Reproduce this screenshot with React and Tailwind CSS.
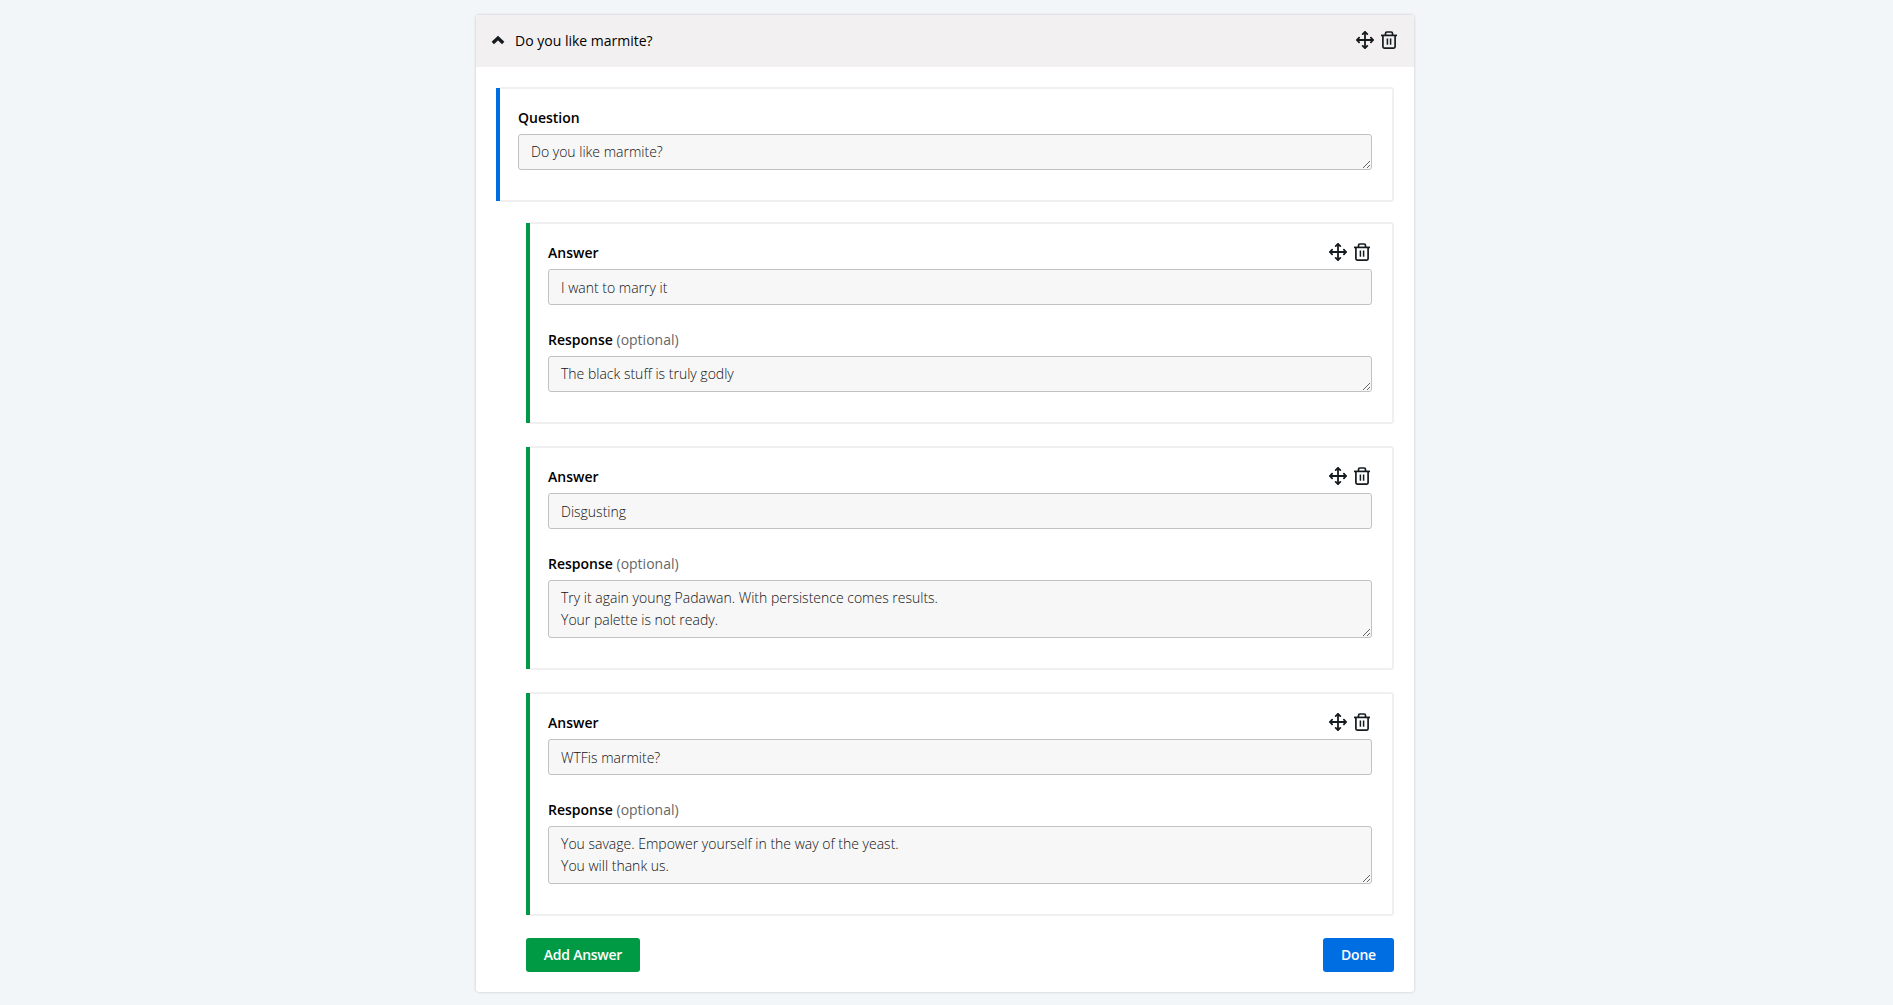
import React from 'react';

const answers = [
    {
        id: 1,
        answer: 'I want to marry it',
        response: 'The black stuff is truly godly',
        rows: 1,
    },
    {
        id: 2,
        answer: 'Disgusting',
        response: 'Try it again young Padawan. With persistence comes results.\nYour palette is not ready.',
        rows: 2,
    },
    {
        id: 3,
        answer: 'WTFis marmite?',
        response: 'You savage. Empower yourself in the way of the yeast.\nYou will thank us.',
        rows: 2,
    },
];

const MoveIcon = () => (
    <svg width="18" height="18" viewBox="0 0 18 18" fill="none" stroke="currentColor" strokeWidth="1.8" strokeLinecap="round" strokeLinejoin="round">
        <path d="M9 1.2V16.8M1.2 9H16.8" />
        <path d="M6.7 3.1L9 1L11.3 3.1M6.7 14.9L9 17L11.3 14.9M3.1 6.7L1 9L3.1 11.3M14.9 6.7L17 9L14.9 11.3" />
    </svg>
);

const TrashIcon = () => (
    <svg width="16" height="18" viewBox="0 0 16 18" fill="none" stroke="currentColor" strokeWidth="1.7">
        <path d="M0 4.4H16" />
        <path d="M4.5 4.2V2.4Q4.5 1 5.9 1H10.1Q11.5 1 11.5 2.4V4.2" />
        <path d="M1.9 4.3V15.8Q1.9 17.1 3.2 17.1H12.8Q14.1 17.1 14.1 15.8V4.3" />
        <path d="M6.4 7.4V13.8M9.6 7.4V13.8" strokeWidth="1.5" />
    </svg>
);

// move + delete buttons, shared by the header and every answer
const Actions = () => (
    <div className="flex items-center gap-[7px] text-[#151b1f]">
        <button aria-label="Move"><MoveIcon /></button>
        <button aria-label="Delete"><TrashIcon /></button>
    </div>
);

const fieldStyles = 'block w-full rounded-[3px] border border-[#c2c2c2] bg-[#f7f7f7] px-3 text-sm leading-[22px] font-light text-[#111111] outline-none';

// Panel with a coloured bar on its left side
const Panel = ({ barColor, children }) => (
    <div className="flex">
        <div className={`my-px w-1 shrink-0 ${barColor}`} />
        <div className="flex-1 rounded-r-[3px] border-2 border-l-0 border-[#f0f0f0] pt-[19px] pr-5 pb-[30px] pl-[18px]">
            {children}
        </div>
    </div>
);

const AnswerPanel = ({ item }) => (
    <Panel barColor="bg-[#009a44]">
        <div className="flex h-[26px] items-start justify-between pr-0.5">
            <label className="text-sm leading-5 font-semibold">Answer</label>
            <Actions />
        </div>
        <input className={`${fieldStyles} pt-[7px] pb-[5px]`} type="text" defaultValue={item.answer} />
        <div className="h-[51px] pt-[25px] text-sm leading-5">
            <label className="font-semibold">Response</label>{' '}
            <span className="text-[#666666]">(optional)</span>
        </div>
        <textarea className={`${fieldStyles} py-1.5`} rows={item.rows} defaultValue={item.response} />
    </Panel>
);

const App = () => {
    return (
        <div className="flex h-[1005px] items-start justify-center bg-[#f2f6f9] pt-[15px] font-['Open_Sans',sans-serif] text-black">
            <div className="mr-[3px] w-[938px] rounded-[3px] bg-white shadow-[0_0_3px_rgba(0,0,0,0.2)]">
                <div className="flex h-[52px] items-center justify-between rounded-t-[3px] bg-[#f3f0f1] pr-[17px] pb-[2px] pl-[15px]">
                    <div className="flex items-center gap-[10px] text-sm">
                        <svg width="14" height="10" viewBox="0 0 14 10" fill="none" stroke="#151b1f" strokeWidth="3.4">
                            <path d="M1.8 8.1L7 3.1L12.2 8.1" />
                        </svg>
                        <span className="pt-px">Do you like marmite?</span>
                    </div>
                    <Actions />
                </div>

                <div className="px-5 pt-5 pb-5">
                    <Panel barColor="bg-[#006ee3]">
                        <div className="h-[26px]">
                            <label className="block text-sm leading-5 font-semibold">Question</label>
                        </div>
                        <textarea className={`${fieldStyles} py-1.5`} rows={1} defaultValue="Do you like marmite?" />
                    </Panel>

                    <div className="mt-5 flex flex-col gap-[22px] pl-[30px]">
                        {answers.map((item) => (
                            <AnswerPanel key={item.id} item={item} />
                        ))}
                        <div className="flex justify-between text-sm font-semibold tracking-[-0.25px] text-white">
                            <button className="h-[34px] w-[114px] rounded-[3px] bg-[#009a44]">Add Answer</button>
                            <button className="h-[34px] w-[71px] rounded-[3px] bg-[#006ee3]">Done</button>
                        </div>
                    </div>
                </div>
            </div>
        </div>
    );
};

export default App;
